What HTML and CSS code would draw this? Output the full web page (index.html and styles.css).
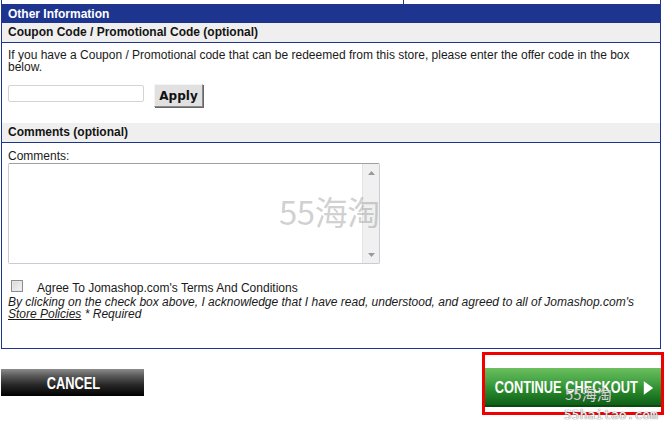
FILE: index.html
```html
<!DOCTYPE html>
<html>
<head>
<meta charset="utf-8">
<link rel="stylesheet" href="styles.css">
</head>
<body>
<div class="top-strip"><div class="top-col"></div></div>
<div class="panel">
  <div class="bar-blue">Other Information</div>
  <div class="bar-sub">Coupon Code / Promotional Code (optional)</div>
  <div class="coupon-body">
    <p class="note">If you have a Coupon / Promotional code that can be redeemed from this store, please enter the offer code in the box below.</p>
    <div class="coupon-row">
      <input class="coupon-input" type="text">
      <button class="apply-btn" type="button">Apply</button>
    </div>
  </div>
  <div class="bar-sub">Comments (optional)</div>
  <div class="comments-body">
    <div class="label">Comments:</div>
    <div class="textarea-wrap">
      <textarea class="comments"></textarea>
      <div class="scrollbar">
        <svg class="arrow" width="7" height="4" viewBox="0 0 7 4"><path d="M0 4 L3.5 0 L7 4 Z" fill="#9a9a9a"/></svg>
        <svg class="arrow" width="7" height="4" viewBox="0 0 7 4"><path d="M0 0 L3.5 4 L7 0 Z" fill="#9a9a9a"/></svg>
      </div>
      <span class="wm-big">55海淘</span>
    </div>
    <div class="agree-row">
      <span class="checkbox"></span>
      <span class="agree-text">Agree To Jomashop.com's Terms And Conditions</span>
    </div>
    <p class="legal">By clicking on the check box above, I acknowledge that I have read, understood, and agreed to all of Jomashop.com's <span class="link">Store Policies</span> * Required</p>
  </div>
</div>
<div class="footer">
  <button class="cancel-btn" type="button"><span class="cond">CANCEL</span></button>
  <div class="highlight">
    <button class="continue-btn" type="button"><span class="cond">CONTINUE CHECKOUT <svg class="tri" width="12" height="14" viewBox="0 0 12 14"><path d="M0 0 L12 7 L0 14 Z" fill="#fff"/></svg></span></button>
    <span class="wm-small">55海淘</span>
    <span class="wm-url">55haitao.com</span>
  </div>
</div>
</body>
</html>
```
FILE: styles.css
```css
html, body {
  margin: 0;
  padding: 0;
  background: #fff;
}
body {
  font-family: "Liberation Sans", Arial, sans-serif;
  font-size: 12px;
  color: #1a1a1a;
  width: 664px;
  height: 423px;
  overflow: hidden;
}
.top-strip {
  margin-left: 1px;
  width: 660px;
  height: 4px;
  box-sizing: border-box;
  border-left: 1px solid #1d358f;
  border-right: 1px solid #1d358f;
  display: flex;
}
.top-col {
  width: 401px;
  border-right: 1px solid #1d358f;
}
.panel {
  margin-left: 1px;
  width: 660px;
  box-sizing: border-box;
  border: 1px solid #1d358f;
  border-top: 0;
}
.bar-blue {
  background: #1d358f;
  color: #fff;
  font-weight: bold;
  height: 19px;
  line-height: 20px;
  padding-left: 6px;
}
.bar-sub {
  background: #efefef;
  font-weight: bold;
  height: 19px;
  line-height: 19px;
  padding-left: 6px;
  border-bottom: 1px solid #1d358f;
  color: #141414;
}
.coupon-body {
  padding: 7px 6px 16px;
}
.note {
  margin: 0;
  line-height: 11.6px;
}
.coupon-row {
  display: flex;
  align-items: flex-start;
  gap: 10px;
  margin-top: 11px;
}
.coupon-input {
  margin: 1px 0 0 0;
  width: 136px;
  height: 17px;
  box-sizing: border-box;
  border: 1px solid #d4d4d4;
  border-radius: 2px;
  padding: 0;
}
.apply-btn {
  margin: 0;
  width: 49px;
  height: 23px;
  box-sizing: border-box;
  font-family: "DejaVu Sans", Verdana, sans-serif;
  font-weight: bold;
  font-size: 12px;
  color: #111;
  background: #e1e1e1;
  border: 1px solid;
  border-color: #f4f4f4 #8a8a8a #8a8a8a #f4f4f4;
  box-shadow: 1px 1px 0 #666;
  padding: 0;
}
.comments-body {
  padding: 7px 6px 28px;
}
.label {
  line-height: 12px;
  margin-bottom: 1px;
}
.textarea-wrap {
  position: relative;
  display: flex;
  width: 372px;
  height: 101px;
  box-sizing: border-box;
  border: 1px solid #c8ccd4;
  border-top-color: #a0a0a0;
  border-radius: 2px;
}
.comments {
  flex: 1;
  border: 0;
  resize: none;
  margin: 0;
  padding: 0;
  outline: none;
}
.scrollbar {
  width: 16px;
  background: #f0f0f0;
  border-left: 1px solid #e4e4e4;
  display: flex;
  flex-direction: column;
  justify-content: space-between;
  align-items: center;
  padding: 7px 0 6px;
}
.arrow {
  display: block;
}
.wm-big {
  position: absolute;
  left: 270px;
  top: 27px;
  font-family: "Noto Sans CJK SC", sans-serif;
  font-size: 33px;
  line-height: 40px;
  color: rgba(150, 150, 150, 0.45);
  letter-spacing: -0.5px;
  white-space: nowrap;
  pointer-events: none;
}
.agree-row {
  display: flex;
  align-items: flex-start;
  margin-top: 16px;
  height: 14px;
}
.checkbox {
  margin-left: 3px;
  width: 12px;
  height: 12px;
  box-sizing: border-box;
  border: 1px solid #8e8e8e;
  background: linear-gradient(135deg, #d8d8d8, #f6f6f6);
  box-shadow: inset 0 0 0 1px #e8e8e8;
}
.agree-text {
  margin-left: 14px;
  line-height: 14px;
  margin-top: 1px;
}
.legal {
  margin: 3px 0 0;
  font-style: italic;
  line-height: 11.6px;
}
.link {
  text-decoration: underline;
}
.footer {
  margin-left: 1px;
  width: 663px;
  display: flex;
  justify-content: space-between;
  align-items: flex-start;
}
.cond {
  display: inline-flex;
  align-items: center;
  gap: 7px;
  white-space: nowrap;
  transform: scaleX(0.8);
  transform-origin: center;
  font-family: "Liberation Sans", Arial, sans-serif;
  font-weight: bold;
  font-size: 16px;
  color: #fff;
}
.cancel-btn {
  margin: 20px 0 0;
  width: 143px;
  height: 27px;
  border: 0;
  padding: 3px 0 0 1px;
  display: flex;
  align-items: center;
  justify-content: center;
  background: linear-gradient(#8c8c8c 0%, #5a5a5a 25%, #262626 60%, #000 100%);
}
.highlight {
  position: relative;
  margin-top: 3px;
  width: 182px;
  box-sizing: border-box;
  border: 3px solid #f00000;
  padding: 13px 0 5px;
}
.continue-btn {
  display: flex;
  align-items: center;
  justify-content: center;
  width: 176px;
  height: 39px;
  margin: 0;
  padding: 3px 0 0 1px;
  border: 0;
  border-bottom: 2px solid #0a4a10;
  box-sizing: border-box;
  background: linear-gradient(#6cbf5e 0%, #45a444 35%, #2a8a2c 60%, #0e5f17 100%);
  overflow: visible;
}
.tri {
  display: block;
}
.wm-small {
  position: absolute;
  left: 80px;
  top: 29px;
  font-family: "Noto Sans CJK SC", sans-serif;
  font-size: 15px;
  line-height: 20px;
  color: rgba(235, 235, 235, 0.85);
  text-shadow: 0 0 1px #555;
  white-space: nowrap;
  pointer-events: none;
}
.wm-url {
  position: absolute;
  left: 79px;
  top: 52px;
  font-family: "DejaVu Sans Mono", monospace;
  font-size: 13px;
  line-height: 16px;
  color: #f4f4f4;
  text-shadow: 0 0 1px #777, 0 0 1px #777;
  pointer-events: none;
  white-space: nowrap;
}
```
